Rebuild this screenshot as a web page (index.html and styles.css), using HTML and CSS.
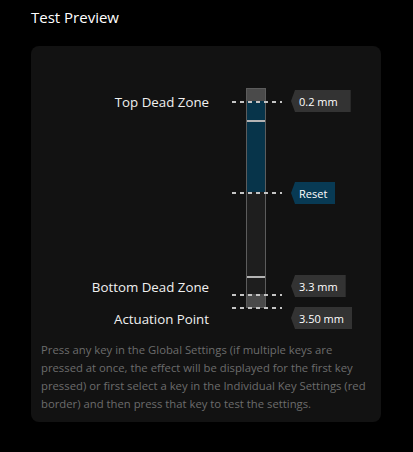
FILE: index.html
```html
<!DOCTYPE html>
<html lang="en">
<head>
<meta charset="utf-8">
<title>Test Preview</title>
<link rel="stylesheet" href="styles.css">
</head>
<body>
  <h2 class="title">Test Preview</h2>
  <section class="card">
    <div class="preview">
      <div class="col labels">
        <span class="label" style="top:36px">Top Dead Zone</span>
        <span class="label" style="top:221px">Bottom Dead Zone</span>
        <span class="label" style="top:253px">Actuation Point</span>
      </div>
      <div class="col scale">
        <div class="bar">
          <div class="seg seg-dead" style="height:12px"></div>
          <div class="seg seg-active" style="height:91px"></div>
          <div class="seg seg-idle" style="height:102px"></div>
          <div class="seg seg-dead" style="height:13px"></div>
          <div class="mark" style="top:31px"></div>
          <div class="mark" style="top:187px"></div>
        </div>
        <div class="dash" style="top:45px"></div>
        <div class="dash" style="top:136px"></div>
        <div class="dash" style="top:238px"></div>
        <div class="dash" style="top:251px"></div>
      </div>
      <div class="col values">
        <span class="badge badge-wide" style="top:34px">0.2 mm</span>
        <span class="badge badge-reset" style="top:126px">Reset</span>
        <span class="badge" style="top:219px">3.3 mm</span>
        <span class="badge" style="top:251px">3.50 mm</span>
      </div>
    </div>
    <p class="hint">Press any key in the Global Settings (if multiple keys are pressed at once, the effect will be displayed for the first key pressed) or first select a key in the Individual Key Settings (red border) and then press that key to test the settings.</p>
  </section>
</body>
</html>
```
FILE: styles.css
```css
html, body {
  margin: 0;
  background: #000;
}
body {
  padding: 0 32px 0 31px;
  font-family: "Open Sans", "Noto Sans", sans-serif;
  color: #fff;
}
.title {
  margin: 6px 0 0;
  font-size: 15px;
  line-height: 22px;
  font-weight: 400;
  color: #fff;
}
.card {
  margin-top: 18px;
  background: #121212;
  border-radius: 8px;
  padding: 10px 10px 9px;
}
.preview {
  display: grid;
  grid-template-columns: 191px 50px 89px;
  height: 280px;
}
.col {
  position: relative;
}
.label {
  position: absolute;
  right: 23px;
  white-space: nowrap;
  font-size: 13.3px;
  line-height: 20px;
  color: #f0f0f0;
}
.bar {
  position: absolute;
  left: 14px;
  top: 32px;
  width: 20px;
  height: 220px;
  box-sizing: border-box;
  border: 1px solid #5c5c5c;
  display: flex;
  flex-direction: column;
}
.seg { flex: none; }
.seg-dead { background: #4a4a4a; }
.seg-active { background: #07344a; }
.seg-idle { background: #1e1e1e; }
.mark {
  position: absolute;
  left: 0;
  right: 0;
  height: 2px;
  background: #b4b4b4;
}
.dash {
  position: absolute;
  left: 0;
  width: 50px;
  height: 2px;
  background: repeating-linear-gradient(to right, #c4c4c4 0 4px, transparent 4px 8px);
}
.badge {
  position: absolute;
  left: 9px;
  height: 22px;
  display: flex;
  align-items: center;
  padding: 0 8px 0 8px;
  background: #333;
  color: #fff;
  font-size: 11px;
  white-space: nowrap;
  clip-path: polygon(4px 0, 100% 0, 100% 100%, 4px 100%, 0 50%);
}
.badge-wide { padding-right: 13px; }
.badge-reset { background: #083a54; }
.hint {
  margin: 5px 0 0;
  font-size: 11.3px;
  line-height: 18px;
  color: #6c6c6c;
}
```
